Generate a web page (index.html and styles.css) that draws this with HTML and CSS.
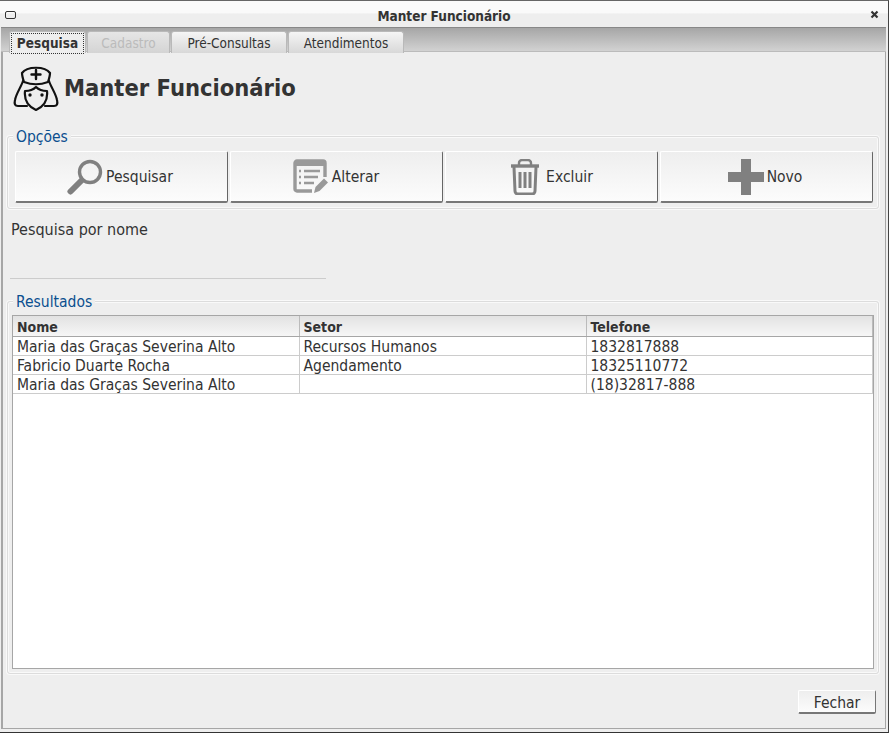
FILE: index.html
```html
<!DOCTYPE html>
<html lang="en">
<head>
    <meta charset="UTF-8">
    <title>Manter Funcionário</title>
    <link rel="stylesheet" href="styles.css">
</head>
<body>
    <div class="window">
        <div class="titlebar">
            <span class="win-icon"></span>
            <span class="win-title">Manter Funcionário</span>
            <svg class="win-close" width="9" height="9" viewBox="0 0 9 9"><path d="M1.500 1.500l6 6M7.500 1.500l-6 6" stroke="#333" stroke-width="2.200" fill="none"/></svg>
        </div>
        <div class="tabstrip">
            <div class="tab tab-active"><span>Pesquisa</span></div>
            <div class="tab tab-disabled">Cadastro</div>
            <div class="tab">Pré-Consultas</div>
            <div class="tab">Atendimentos</div>
        </div>
        <div class="content">
            <div class="page-head">
                <svg width="46" height="46" viewBox="0 0 46 46" fill="none" stroke="#111" stroke-width="2.200" stroke-linejoin="round" stroke-linecap="round">
                    <path d="M9 8C14 1 32 1 37 8c0 3-1 6-2 9-8 3-16 3-24 0-1-3-2-6-2-9z"/>
                    <path d="M23 5v9M18.500 9.500h9" stroke-width="2.400"/>
                    <path d="M10 16C8 22 3 29 2 35c-1 4 0 6 3 6h9"/>
                    <path d="M36 16c2 6 7 13 8 19 1 4 0 6-3 6h-9"/>
                    <path d="M12 26c5 0 8-1 11-4 3 3 6 4 11 4 1 9-2 15-11 19-9-4-12-10-11-19z"/>
                    <circle cx="17" cy="30" r="1.700" fill="#111" stroke="none"/>
                    <circle cx="29" cy="30" r="1.700" fill="#111" stroke="none"/>
                </svg>
                <h1>Manter Funcionário</h1>
            </div>

            <fieldset class="group group-options">
                <legend>Opções</legend>
                <div class="actions">
                    <button class="action action-shift">
                        <svg width="36" height="36" viewBox="0 0 36 36" fill="none" stroke="#808080"><circle cx="23" cy="13" r="10.500" stroke-width="3.400"/><path d="M14.500 21.500L3.500 32.500" stroke-width="6" stroke-linecap="round"/></svg>
                        <span>Pesquisar</span>
                    </button>
                    <button class="action action-alter">
                        <svg width="36" height="36" viewBox="0 0 36 36" fill="none"><path d="M19 32H4a2 2 0 0 1-2-2V4a2 2 0 0 1 2-2h26a2 2 0 0 1 2 2v14" stroke="#999" stroke-width="3.400"/><rect x="2" y="2" width="30" height="5" fill="#999"/><path d="M11 12h16M11 18h14M11 24h10M6 12h2M6 18h2M6 24h2" stroke="#999" stroke-width="2.400"/><path d="M21 34l1.500-6L31 19.500l4 4L26.500 32z" fill="#999"/></svg>
                        <span>Alterar</span>
                    </button>
                    <button class="action action-trash">
                        <svg width="30" height="36" viewBox="0 0 30 36" fill="none" stroke="#808080"><path d="M1 7h28" stroke-width="3.400"/><path d="M9 6V4a3 3 0 0 1 3-3h6a3 3 0 0 1 3 3v2" stroke-width="2.400"/><path d="M4 8l1 24a3 3 0 0 0 3 3h14a3 3 0 0 0 3-3l1-24" stroke-width="3"/><path d="M10 13v16M15 13v16M20 13v16" stroke-width="3"/></svg>
                        <span>Excluir</span>
                    </button>
                    <button class="action action-shift">
                        <svg width="36" height="36" viewBox="0 0 36 36"><path d="M13 0h10v13h13v10H23v13H13V23H0V13h13z" fill="#808080"/></svg>
                        <span>Novo</span>
                    </button>
                </div>
            </fieldset>

            <label class="search-label" for="nome">Pesquisa por nome</label>
            <input class="search-input" id="nome" type="text">

            <fieldset class="group group-results">
                <legend>Resultados</legend>
                <div class="grid">
                    <table>
                        <thead>
                            <tr><th class="col-nome">Nome</th><th class="col-setor">Setor</th><th>Telefone</th></tr>
                        </thead>
                        <tbody>
                            <tr><td>Maria das Graças Severina Alto</td><td>Recursos Humanos</td><td>1832817888</td></tr>
                            <tr><td>Fabricio Duarte Rocha</td><td>Agendamento</td><td>18325110772</td></tr>
                            <tr><td>Maria das Graças Severina Alto</td><td></td><td>(18)32817-888</td></tr>
                        </tbody>
                    </table>
                </div>
            </fieldset>

            <div class="footer">
                <button class="close-btn">Fechar</button>
            </div>
        </div>
    </div>
</body>
</html>
```

FILE: styles.css
```css
body {
    margin: 0;
    background-color: #ffffff;
    font-family: "DejaVu Sans Condensed", "DejaVu Sans", sans-serif;
    font-stretch: condensed;
    color: #333;
}

.window {
    width: 889px;
    height: 733px;
    box-sizing: border-box;
    border-top: 1px solid #666;
    border-right: 1px solid #444;
    border-bottom: 1px solid #333;
    background-color: #eeeeee;
    display: flex;
    flex-direction: column;
}

.titlebar {
    height: 26px;
    flex: none;
    display: flex;
    align-items: center;
    justify-content: center;
    position: relative;
    padding-top: 3px;
    box-sizing: border-box;
    background: linear-gradient(#fafafa 45%, #eeeeee 50%);
}

.win-icon {
    position: absolute;
    left: 5px;
    top: 10px;
    width: 9px;
    height: 6px;
    border: 1px solid #333;
    border-radius: 2px;
}

.win-close {
    position: absolute;
    right: 9px;
    top: 9px;
}

.win-title {
    font-size: 13.500px;
    font-weight: bold;
}

.tabstrip {
    height: 25px;
    flex: none;
    box-sizing: border-box;
    margin: 0 2px 0 1px;
    padding: 3px 0 0 8px;
    display: flex;
    gap: 1px;
    border-top: 1px solid #888;
    border-bottom: 1px solid #bbb;
    background: linear-gradient(#a6a6a6, #d2d2d2);
}

.tab {
    width: 116px;
    height: 22px;
    box-sizing: border-box;
    font-size: 13.500px;
    line-height: 22px;
    text-align: center;
    border: 1px solid #b9b9b9;
    border-bottom: none;
    border-radius: 3px 3px 0 0;
    background: linear-gradient(#f5f5f5, #d8d8d8);
}

.tab-active {
    width: 77px;
    font-weight: bold;
    padding: 1px;
    background: #eeeeee;
    line-height: 18px;
}

.tab-active span {
    display: block;
    height: 19px;
    border: 1px dotted #333;
}

.tab-disabled {
    width: 83px;
    color: #bbb;
    background: linear-gradient(#e6e6e6, #d4d4d4);
}

.content {
    flex: 1;
    display: flex;
    flex-direction: column;
    margin: 0 2px 3px 1px;
    border-left: 2px solid #a6a6a6;
    border-right: 1px solid #a6a6a6;
    border-bottom: 1px solid #a6a6a6;
    padding: 0 6px 0 4px;
    min-height: 0;
}

.page-head {
    display: flex;
    align-items: center;
    gap: 5px;
    box-sizing: border-box;
    flex: none;
    height: 75px;
    padding: 0 0 3px 6px;
}

.page-head h1 {
    margin: 0;
    font-size: 23.500px;
    font-weight: bold;
}

.group {
    box-sizing: border-box;
    flex: none;
    margin: 0;
    padding: 0 4px;
    border: 1px solid #dcdcdc;
    box-shadow: inset 0 0 0 1px #f9f9f9, 0 0 0 1px #f9f9f9;
    border-radius: 3px;
    min-width: 0;
}

.group legend {
    margin-left: 1px;
    padding: 2px 3px 0 3px;
    font-size: 15.500px;
    line-height: 16px;
    color: #0b4f8f;
    background-color: #eeeeee;
}

.group-options {
    height: 82px;
}

.actions {
    display: flex;
    gap: 2px;
    padding: 6px 1px 0 3px;
}

.action {
    flex: none;
    width: 213px;
    height: 52px;
    box-sizing: border-box;
    display: flex;
    align-items: center;
    justify-content: center;
    gap: 3px;
    padding: 0;
    font: inherit;
    font-size: 15.500px;
    color: #333;
    border: 1px solid #fff;
    border-right-color: #666;
    border-bottom: 2px solid #777;
    border-radius: 2px;
    background: linear-gradient(#eeeeee, #fcfcfc);
}

.action-shift {
    padding-right: 3px;
}

.action-alter {
    padding-right: 1px;
}

.action-trash {
    gap: 6px;
}

.search-label {
    display: block;
    margin: 12px 0 0 4px;
    font-size: 16px;
    line-height: 18px;
}

.search-input {
    display: block;
    box-sizing: border-box;
    flex: none;
    width: 316px;
    height: 32px;
    margin: 8px 0 0 3px;
    border: none;
    border-bottom: 1px solid #ccc;
    background: transparent;
}

.group-results {
    height: 382px;
    margin-top: 13px;
}

.grid {
    box-sizing: border-box;
    height: 354px;
    background-color: #fff;
    border: 1px solid #a6a6a6;
    margin-top: 5px;
}

table {
    width: 100%;
    border-collapse: collapse;
    table-layout: fixed;
    font-size: 15.500px;
}

th {
    height: 20px;
    padding: 3px 4px 0;
    box-sizing: border-box;
    text-align: left;
    font-size: 14px;
    line-height: 16px;
    background: linear-gradient(#e2e2e2, #f6f6f6);
    border-right: 1px solid #bbb;
    border-bottom: 1px solid #a6a6a6;
}

td {
    height: 16px;
    padding: 2px 4px 0;
    line-height: 16px;
    border-right: 1px solid #ccc;
    border-bottom: 1px solid #ccc;
    white-space: nowrap;
}

.col-nome {
    width: 286px;
}

.col-setor {
    width: 287px;
}

.footer {
    display: flex;
    justify-content: flex-end;
    padding: 16px 3px 0 0;
}

.close-btn {
    width: 78px;
    height: 24px;
    padding: 2px 0 0;
    font: inherit;
    font-size: 15.500px;
    color: #333;
    border: 1px solid #fff;
    border-right-color: #777;
    border-bottom: 2px solid #777;
    border-radius: 2px;
    background: linear-gradient(#eeeeee, #fcfcfc);
}
```
